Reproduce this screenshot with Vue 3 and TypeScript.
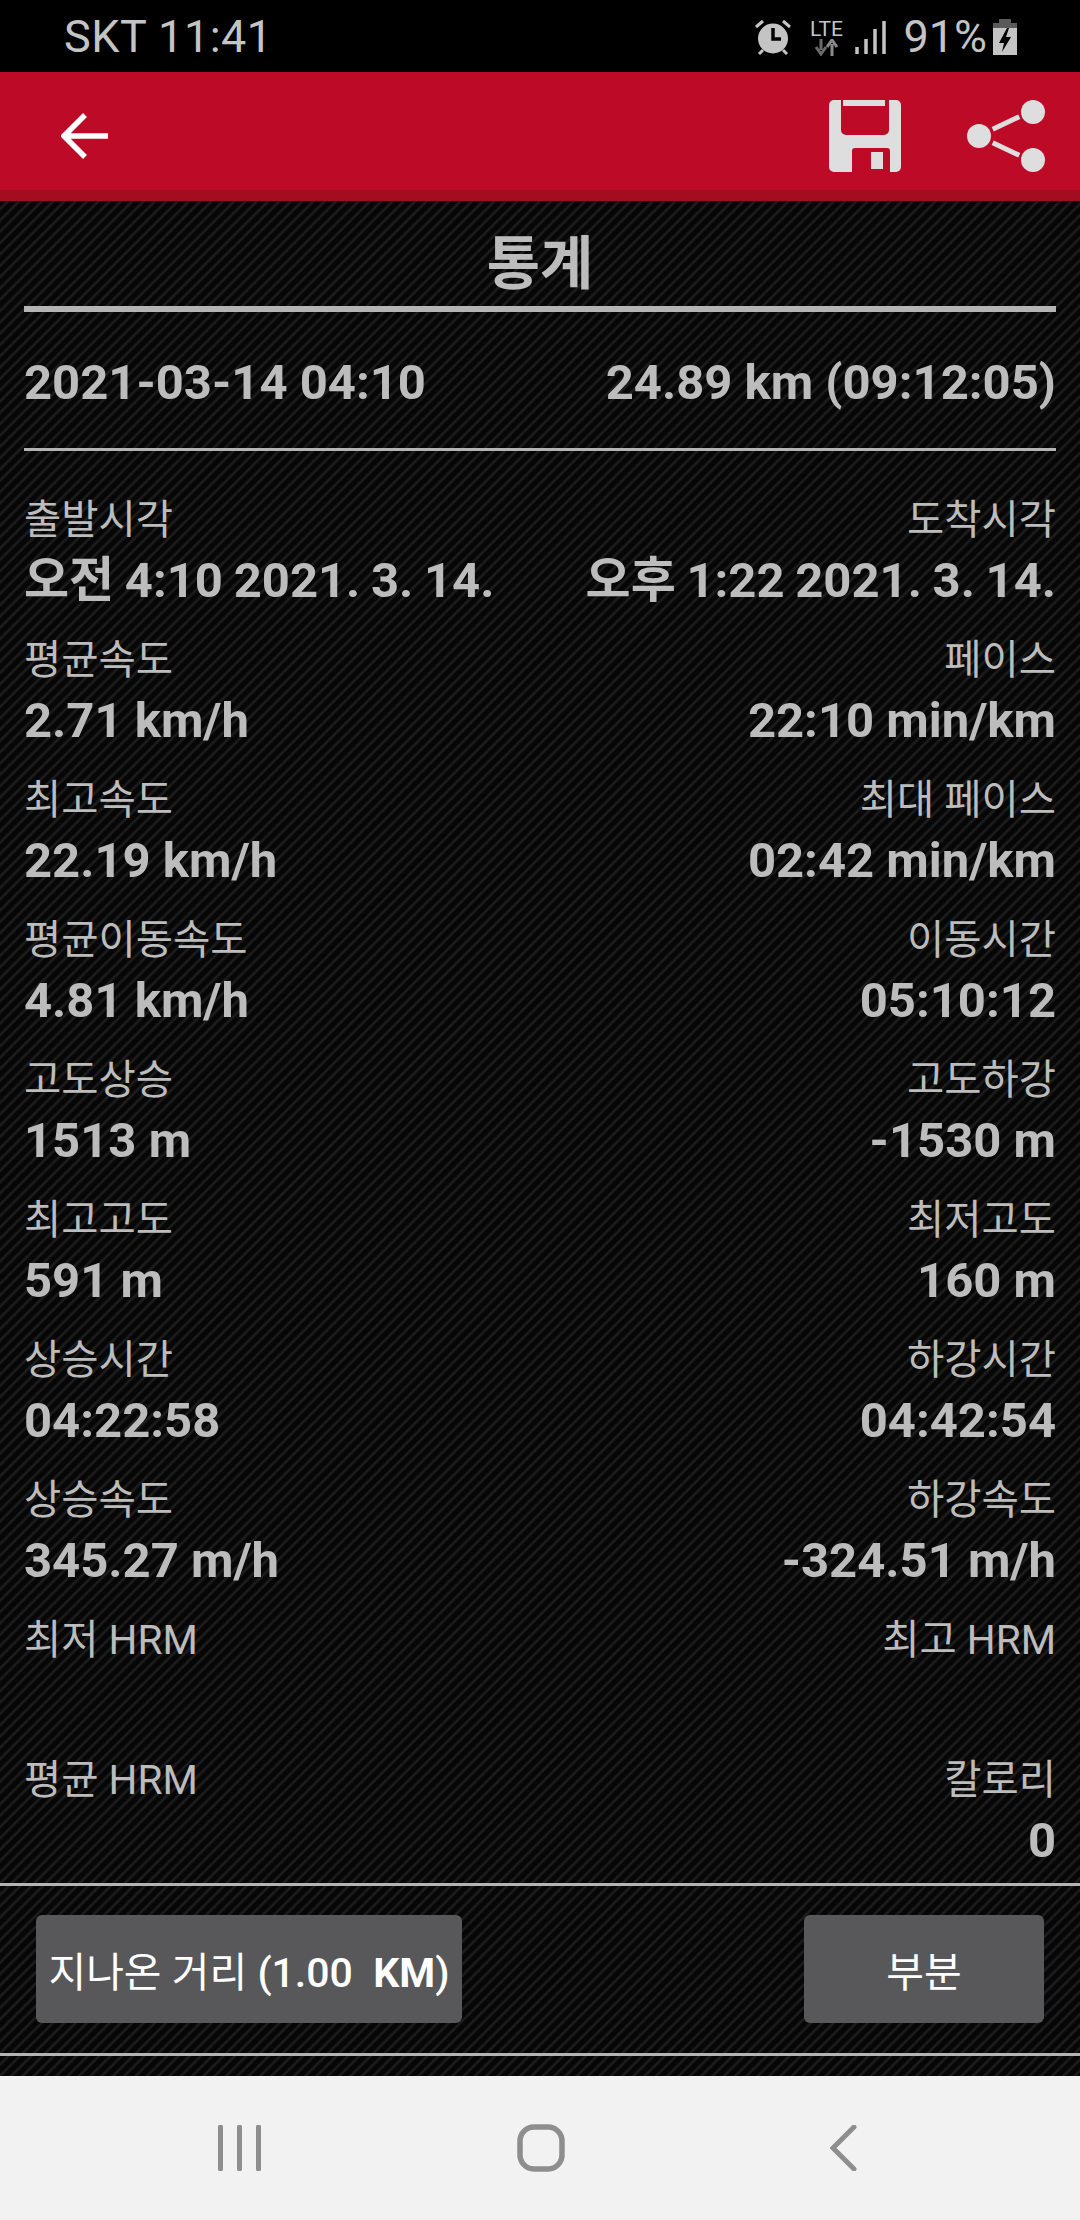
<script setup lang="ts">
interface Stat {
  label: string
  value: string
}

const rows: Stat[][] = [
  [{ label: '출발시각', value: '오전 4:10 2021. 3. 14.' }, { label: '도착시각', value: '오후 1:22 2021. 3. 14.' }],
  [{ label: '평균속도', value: '2.71 km/h' }, { label: '페이스', value: '22:10 min/km' }],
  [{ label: '최고속도', value: '22.19 km/h' }, { label: '최대 페이스', value: '02:42 min/km' }],
  [{ label: '평균이동속도', value: '4.81 km/h' }, { label: '이동시간', value: '05:10:12' }],
  [{ label: '고도상승', value: '1513 m' }, { label: '고도하강', value: '-1530 m' }],
  [{ label: '최고고도', value: '591 m' }, { label: '최저고도', value: '160 m' }],
  [{ label: '상승시간', value: '04:22:58' }, { label: '하강시간', value: '04:42:54' }],
  [{ label: '상승속도', value: '345.27 m/h' }, { label: '하강속도', value: '-324.51 m/h' }],
  [{ label: '최저 HRM', value: '' }, { label: '최고 HRM', value: '' }],
  [{ label: '평균 HRM', value: '' }, { label: '칼로리', value: '0' }],
]
</script>

<template>
  <div class="screen">
    <div class="status">
      <span class="status-left">SKT 11:41</span>
      <div class="status-right">
        <svg class="alarm" width="38" height="36" viewBox="0 0 38 36">
          <circle cx="19" cy="19.5" r="15" fill="#c4c4c4" />
          <path d="M19 9v11h8" fill="none" stroke="#000" stroke-width="3.5" />
          <path d="M2 8l7-6M36 8l-7-6M5 35l4-4M33 35l-4-4" stroke="#c4c4c4" stroke-width="3" />
        </svg>
        <div class="lte">
          <span>LTE</span>
          <svg width="26" height="17" viewBox="0 0 26 17">
            <path d="M8 0v11M3 8l5 7 5-7" fill="none" stroke="#6b6b6b" stroke-width="3" />
            <path d="M19 17V5M14 8l5-7 5 7" fill="none" stroke="#8a8a8a" stroke-width="3" />
          </svg>
        </div>
        <svg class="signal" width="32" height="34" viewBox="0 0 32 34">
          <path d="M2 27v7M11 19v15M20 9v25M29 1v33" stroke="#c4c4c4" stroke-width="3.5" fill="none" />
        </svg>
        <span class="battery-text">91%</span>
        <svg class="battery" width="24" height="36" viewBox="0 0 24 36">
          <rect x="6" y="0" width="12" height="4" fill="#5a5a5a" />
          <rect x="0" y="4" width="24" height="5" fill="#5a5a5a" />
          <rect x="0" y="9" width="24" height="27" fill="#c4c4c4" />
          <path d="M14 9l-8 15h5l-2 9 9-15h-5l3-9z" fill="#000" />
        </svg>
      </div>
    </div>

    <div class="toolbar">
      <svg class="back" width="48" height="48" viewBox="0 0 48 48">
        <path d="M24 3L3 24l21 21M3 24h44" fill="none" stroke="#fff" stroke-width="5.5" />
      </svg>
      <div class="toolbar-actions">
        <svg width="72" height="72" viewBox="0 0 72 72">
          <path
            fill-rule="evenodd"
            fill="#dedede"
            d="M5 0h62a5 5 0 0 1 5 5v62a5 5 0 0 1-5 5H61V51a3 3 0 0 0-3-3H26a3 3 0 0 0-3 3v21H5a5 5 0 0 1-5-5V5a5 5 0 0 1 5-5zM12 0v30a5 5 0 0 0 5 5h38a5 5 0 0 0 5-5V0z"
          />
          <path fill="#dedede" d="M14 0h42v6H14zM42 52h12v17H42z" />
        </svg>
        <svg width="78" height="72" viewBox="0 0 78 72">
          <circle cx="66" cy="12" r="12" fill="#dedede" />
          <circle cx="12" cy="36" r="12" fill="#dedede" />
          <circle cx="66" cy="60" r="12" fill="#dedede" />
          <path d="M25.7 29.3L52.3 16.7M25.7 42.7L52.3 55.3" stroke="#dedede" stroke-width="5" fill="none" />
        </svg>
      </div>
    </div>

    <div class="content">
      <h1 class="title">통계</h1>
      <div class="summary">
        <span>2021-03-14 04:10</span>
        <span>24.89 km (09:12:05)</span>
      </div>
      <div class="stats">
        <div v-for="(row, i) in rows" :key="i" class="stat-row">
          <div v-for="stat in row" :key="stat.label" class="stat">
            <div class="stat-label">{{ stat.label }}</div>
            <div class="stat-value">{{ stat.value }}</div>
          </div>
        </div>
      </div>
      <div class="buttons">
        <button class="btn btn-distance">지나온 거리 <span>(1.00&nbsp; <b>KM</b>)</span></button>
        <button class="btn btn-part">부분</button>
      </div>
    </div>

    <div class="navbar">
      <svg width="43" height="46" viewBox="0 0 43 46">
        <path d="M2.5 2v42M21.5 2v42M40.5 2v42" stroke="#8e8e8e" stroke-width="5" stroke-linecap="round" />
      </svg>
      <svg class="nav-home" width="48" height="48" viewBox="0 0 48 48">
        <rect x="3" y="3" width="42" height="42" rx="14" fill="none" stroke="#8e8e8e" stroke-width="5.5" />
      </svg>
      <svg class="nav-back" width="27" height="46" viewBox="0 0 27 46">
        <path d="M24 2L3 23l21 21" fill="none" stroke="#8e8e8e" stroke-width="5" stroke-linecap="round" />
      </svg>
    </div>
  </div>
</template>

<style>
html,
body {
  margin: 0;
  background: #000;
}
</style>

<style scoped>
.screen {
  width: 1080px;
  height: 2220px;
  display: flex;
  flex-direction: column;
  font-family: Roboto, "Noto Sans CJK KR", sans-serif;
  overflow: hidden;
}

.status {
  height: 72px;
  flex: none;
  background: #000;
  color: #c4c4c4;
  display: flex;
  align-items: center;
  justify-content: space-between;
  padding: 2px 63px 0 64px;
  box-sizing: border-box;
}

.status-left {
  font-size: 45px;
  line-height: 70px;
  letter-spacing: 0.5px;
}

.status-right {
  display: flex;
  align-items: center;
}

.lte {
  display: flex;
  flex-direction: column;
  align-items: center;
  width: 36px;
  margin-left: 16px;
  font-size: 21px;
  line-height: 20px;
}

.signal {
  margin-left: 11px;
}

.battery-text {
  font-size: 45px;
  margin-left: 16px;
  line-height: 70px;
}

.battery {
  margin-left: 6px;
}

.toolbar {
  height: 129px;
  flex: none;
  box-sizing: border-box;
  background: #bc0a27;
  border-bottom: 11px solid #a30d20;
  display: flex;
  align-items: center;
  justify-content: space-between;
  padding: 10px 35px 0 61px;
}

.toolbar-actions {
  display: flex;
  gap: 66px;
  align-items: center;
}

.content {
  flex: 1;
  background-color: #0a0a0a;
  background-image: repeating-linear-gradient(
    135deg,
    #060606 0,
    #060606 3.5px,
    #1e1e1e 5.5px,
    #1e1e1e 6px,
    #060606 8px
  );
  color: #bcbcbc;
  padding: 0 24px;
  display: flex;
  flex-direction: column;
}

.title {
  margin: 0;
  height: 105px;
  padding-top: 22px;
  line-height: 83px;
  box-sizing: border-box;
  text-align: center;
  font-size: 58px;
  font-weight: 700;
}

.summary {
  height: 145px;
  box-sizing: border-box;
  padding-top: 4px;
  display: flex;
  align-items: center;
  justify-content: space-between;
  border-top: 6px solid #b4b4b4;
  border-bottom: 3px solid #b4b4b4;
  font-size: 49px;
  font-weight: 700;
}

.stats {
  padding-top: 38px;
}

.stat-row {
  height: 140px;
  display: flex;
  justify-content: space-between;
}

.stat-row:first-child .stat-value {
  word-spacing: -1.5px;
}

.stat-row:last-child {
  height: 134px;
}

.stat:last-child {
  text-align: right;
}

.stat-label {
  font-size: 40.5px;
  line-height: 62px;
  height: 61px;
}

.stat-value {
  font-size: 49px;
  font-weight: 700;
  line-height: 62px;
  height: 62px;
}

.buttons {
  margin: 0 -24px;
  height: 173px;
  padding: 29px 36px 0;
  box-sizing: border-box;
  display: flex;
  justify-content: space-between;
  align-items: flex-start;
  border-top: 3px solid #b4b4b4;
  border-bottom: 3px solid #b4b4b4;
}

.btn {
  height: 108px;
  border: none;
  border-radius: 6px;
  background: #58585a;
  color: #fff;
  font-family: inherit;
  font-size: 41px;
  padding: 0;
}

.btn span {
  font-weight: 500;
}

.btn b {
  font-weight: 700;
}

.btn-distance {
  width: 426px;
}

.btn-part {
  width: 240px;
}

.navbar {
  height: 144px;
  flex: none;
  background: #f2f2f2;
  display: flex;
  align-items: center;
  padding-left: 218px;
  box-sizing: border-box;
}

.nav-home {
  margin-left: 256px;
}

.nav-back {
  margin-left: 265px;
}
</style>
